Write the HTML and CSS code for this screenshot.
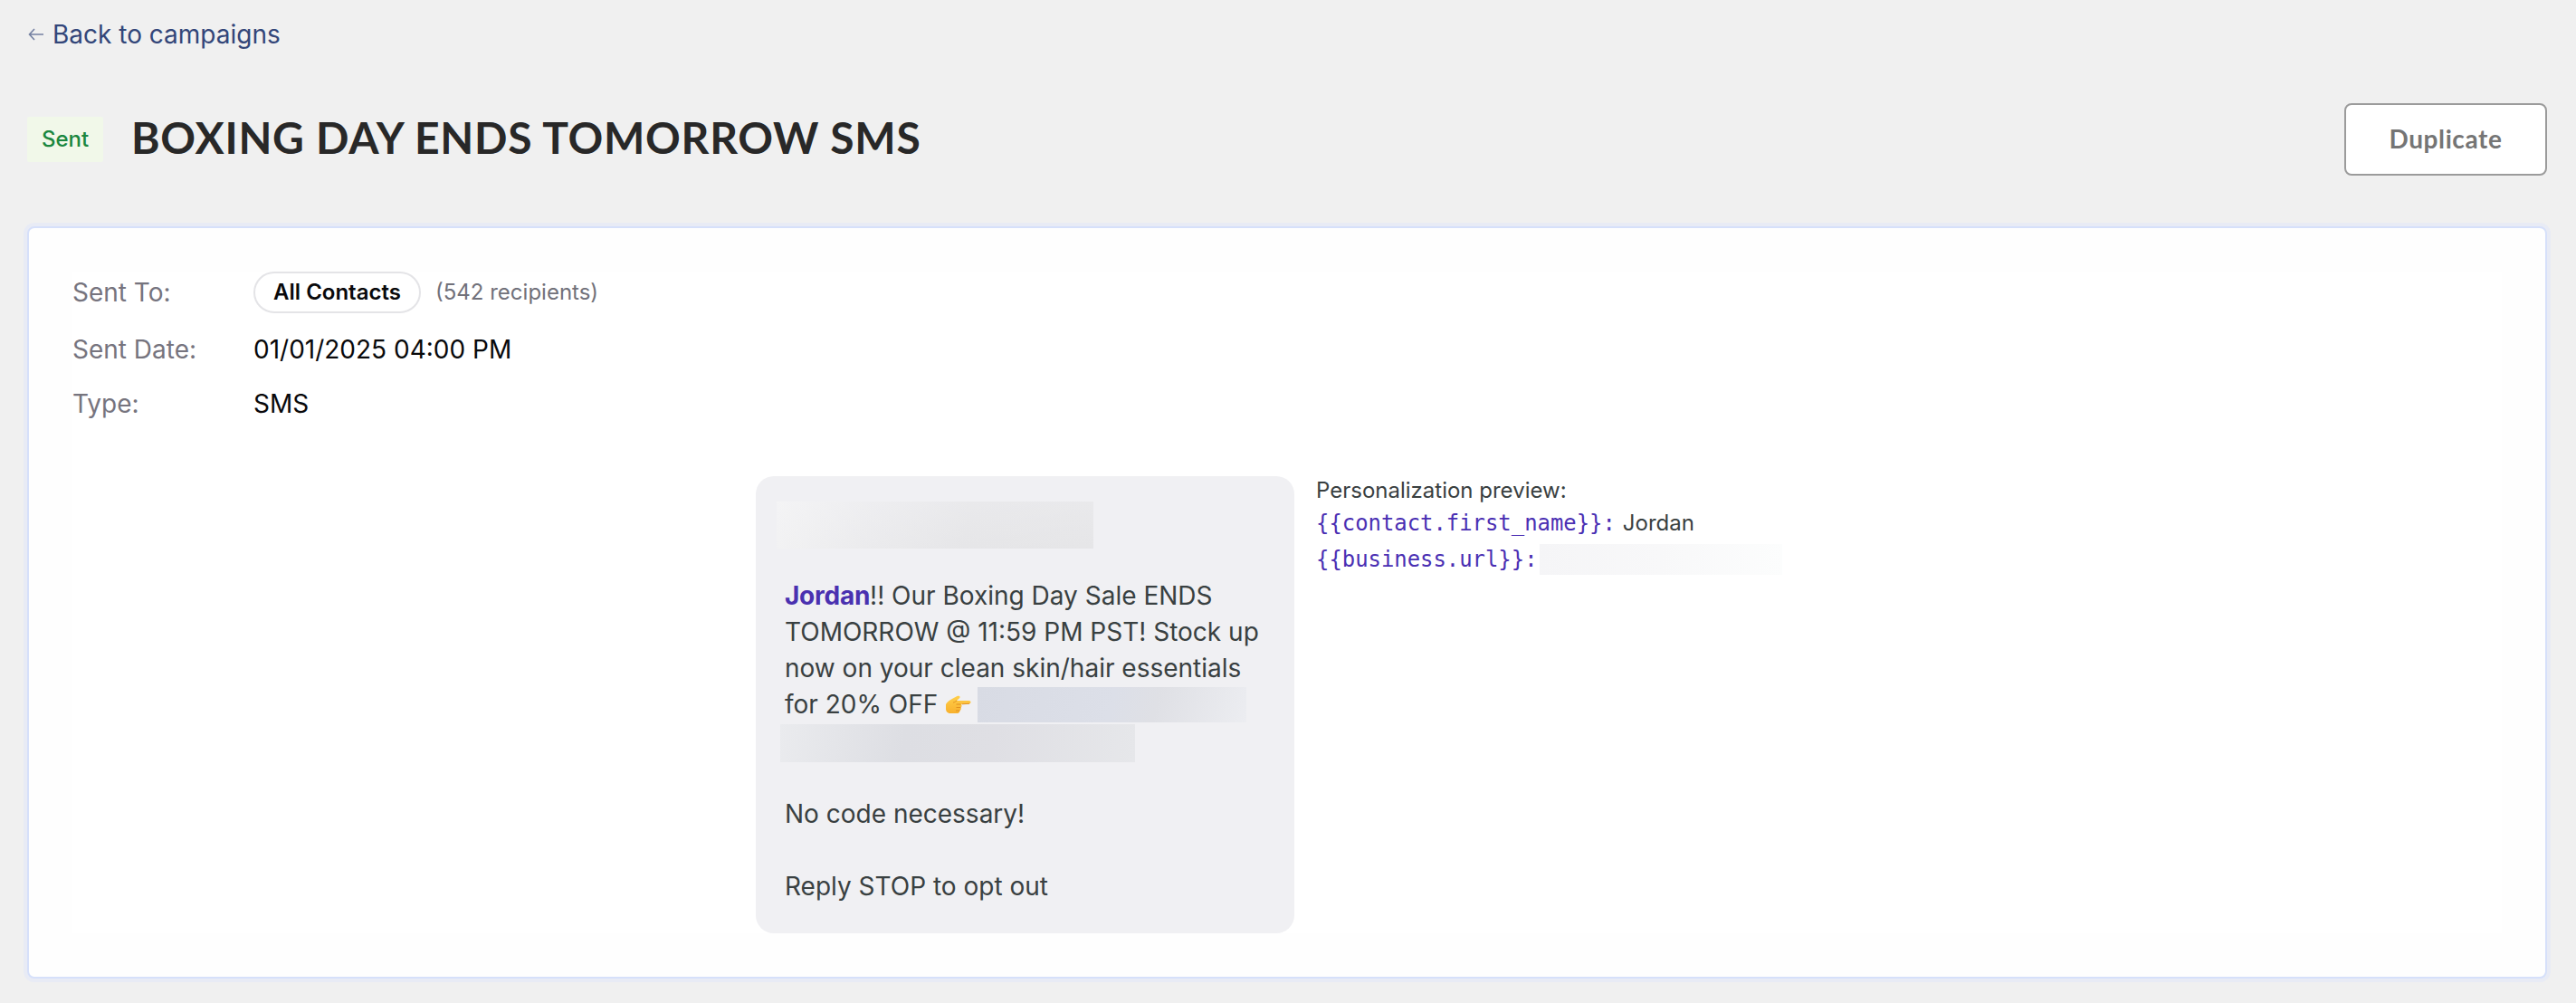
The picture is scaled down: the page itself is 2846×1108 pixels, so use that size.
FILE: index.html
```html
<!DOCTYPE html>
<html lang="en">
<head>
<meta charset="utf-8">
<title>BOXING DAY ENDS TOMORROW SMS</title>
<link rel="stylesheet" href="styles.css">
</head>
<body>
<a class="back" href="#">
  <svg class="back-icon" width="18" height="14" viewBox="0 0 18 14" fill="none" stroke="currentColor" stroke-width="1.6"><path d="M17 7H1.500M7 1L1.500 7L7 13"/></svg>
  <span class="back-text">Back to campaigns</span>
</a>
<header class="header">
  <span class="badge">Sent</span>
  <h1 class="title">BOXING DAY ENDS TOMORROW SMS</h1>
  <button class="duplicate"><span class="duplicate-text">Duplicate</span></button>
</header>
<main class="card">
  <div class="content">
    <dl class="details">
      <dt>Sent To:</dt>
      <dd class="recipients"><span class="pill">All Contacts</span><span class="count">(542 recipients)</span></dd>
      <dt>Sent Date:</dt>
      <dd>01/01/2025 04:00 PM</dd>
      <dt>Type:</dt>
      <dd>SMS</dd>
    </dl>
    <section class="preview">
      <div class="bubble">
        <div class="redacted redacted-sender"></div>
        <p class="message"><strong>Jordan</strong>!! Our Boxing Day Sale ENDS<br>TOMORROW @ 11:59 PM PST! Stock up<br>now on your clean skin/hair essentials</p>
        <div class="offer">
          <span>for 20% OFF</span>
          <svg class="hand" width="29" height="21" viewBox="0 0 29 21">
            <defs><linearGradient id="skin" x1="0" y1="0" x2="0" y2="1"><stop offset="0" stop-color="#ffcf4a"/><stop offset="1" stop-color="#f8b02c"/></linearGradient></defs>
            <path fill="url(#skin)" d="M1 10C3 6 8 4 13 1.200C16-.3 18 2 15.500 3.800L13 6H26.500C29.200 6.200 29.200 9.300 26.500 9.500L18 10C19 11.500 18.500 13 17.500 13.500C18.300 15 17.500 16.500 16.400 17C16.500 19 15 20 13 20H6C2.500 20 1 17.500 1 15Z"/>
            <path fill="none" stroke="#dc8a1d" stroke-width=".9" d="M17.500 10H12.500M17.300 13.500H12.500M16.300 17H12M13 6C11 7.500 10 8 9 8M27 9.300L19 9.800"/>
          </svg>
          <span class="redacted redacted-link"></span>
        </div>
        <div class="redacted redacted-rest"></div>
        <p class="message">No code necessary!</p>
        <p class="message message-last">Reply STOP to opt out</p>
      </div>
      <aside class="personalization">
        <div class="p-title">Personalization preview:</div>
        <div class="p-row"><code>{{contact.first_name}}:</code><span class="p-value">Jordan</span></div>
        <div class="p-row p-row-url"><code>{{business.url}}:</code><span class="redacted redacted-url"></span></div>
      </aside>
    </section>
  </div>
</main>
</body>
</html>
```
FILE: styles.css
```css
* { box-sizing: border-box; }
body {
  margin: 0;
  padding: 18px 32px 0 30px;
  height: 1108px;
  background: #f0f0f0;
  font-family: Inter, "Liberation Sans", sans-serif;
  font-size: 28px;
  line-height: 40px;
  white-space: nowrap;
}
p, h1, dl, dd { margin: 0; }
.back {
  display: flex;
  align-items: center;
  gap: 9px;
  height: 40px;
  padding-left: 1px;
  color: #334679;
  text-decoration: none;
}
.back-icon { opacity: .65; }
.header {
  display: flex;
  align-items: center;
  height: 80px;
  margin-top: 56px;
}
.badge {
  width: 84px;
  height: 50px;
  border-radius: 2px;
  background: #f1f8e9;
  color: #1b873f;
  font-size: 24px;
  font-weight: 500;
  line-height: 50px;
  text-align: center;
}
.title {
  flex: 1;
  margin-left: 31px;
  padding-bottom: 4px;
  color: #282828;
  font-family: Lato, sans-serif;
  font-size: 48px;
  font-weight: 700;
  line-height: 64px;
  letter-spacing: .72px;
}
.duplicate {
  width: 224px;
  height: 80px;
  padding: 0 0 3px;
  border: 2px solid #9b9b9b;
  border-radius: 8px;
  background: #fff;
  color: #757575;
  font-family: Lato, sans-serif;
  font-size: 28px;
  font-weight: 700;
  letter-spacing: .6px;
}
.card {
  height: 831px;
  margin-top: 56px;
  padding: 48px;
  border: 2px solid #d6e0fa;
  border-radius: 8px;
  background: #fefefe;
  box-shadow: 0 0 0 4px #e8ebf5;
}
.content { height: 731px; background: #fff; }
.details {
  display: grid;
  grid-template-columns: 200px 1fr;
  grid-template-rows: 46px 40px 40px;
  row-gap: 20px;
  align-items: center;
}
dt { color: #76747e; }
dd { color: #09090b; }
.recipients { display: flex; align-items: center; gap: 16px; font-size: 24px; }
.pill {
  width: 185px;
  height: 46px;
  border: 2px solid #e4e4e7;
  border-radius: 23px;
  line-height: 41px;
  text-align: center;
  font-weight: 600;
}
.count { color: #71717a; }
.preview { display: flex; margin: 60px 0 0 755px; }
.bubble {
  width: 595px;
  height: 505px;
  padding: 28px 32px;
  border-radius: 20px;
  background: #f0f0f3;
  color: #394041;
}
strong { color: #4a31b0; font-weight: 700; letter-spacing: -.25px; }
.redacted { display: block; }
.redacted-sender {
  width: 350px;
  height: 52px;
  margin: 0 0 32px -9px;
  background: linear-gradient(175deg, rgba(240,240,243,.5), rgba(229,229,231,.3)), linear-gradient(100deg, #f7f7f7, #ececee 30%, #e5e5e7 60%, #e6e6e8);
}
.offer { display: flex; align-items: center; height: 41px; }
.offer > span:first-child { margin-top: -1px; }
.hand { margin-left: 8px; }
.redacted-link {
  width: 297px;
  height: 39px;
  margin-left: 7px;
  background: linear-gradient(105deg, #d8dbe4, #dcdfe8 50%, #dfe0e5 66%, #ecedf1);
}
.redacted-rest {
  width: 392px;
  height: 42px;
  margin: 1px 0 37px -5px;
  background: linear-gradient(100deg, #eaebee, #dddee3 35%, #dfdfe4 60%, #e6e7ea);
}
.message-last { margin-top: 40px; }
.personalization {
  margin: -2px 0 0 24px;
  color: #394041;
  font-size: 24px;
  line-height: 36px;
}
.p-row { display: flex; align-items: center; height: 35px; }
.p-row code {
  color: #4a2fb3;
  font-family: "DejaVu Sans Mono", monospace;
  font-size: 23.9px;
}
.p-value { margin-left: 8px; }
.p-row-url { margin-top: 5px; }
.redacted-url {
  width: 268px;
  height: 34px;
  margin-left: 2px;
  background: linear-gradient(90deg, #f5f5f7, #f8f8f9 50%, #fcfdfd);
}
```
